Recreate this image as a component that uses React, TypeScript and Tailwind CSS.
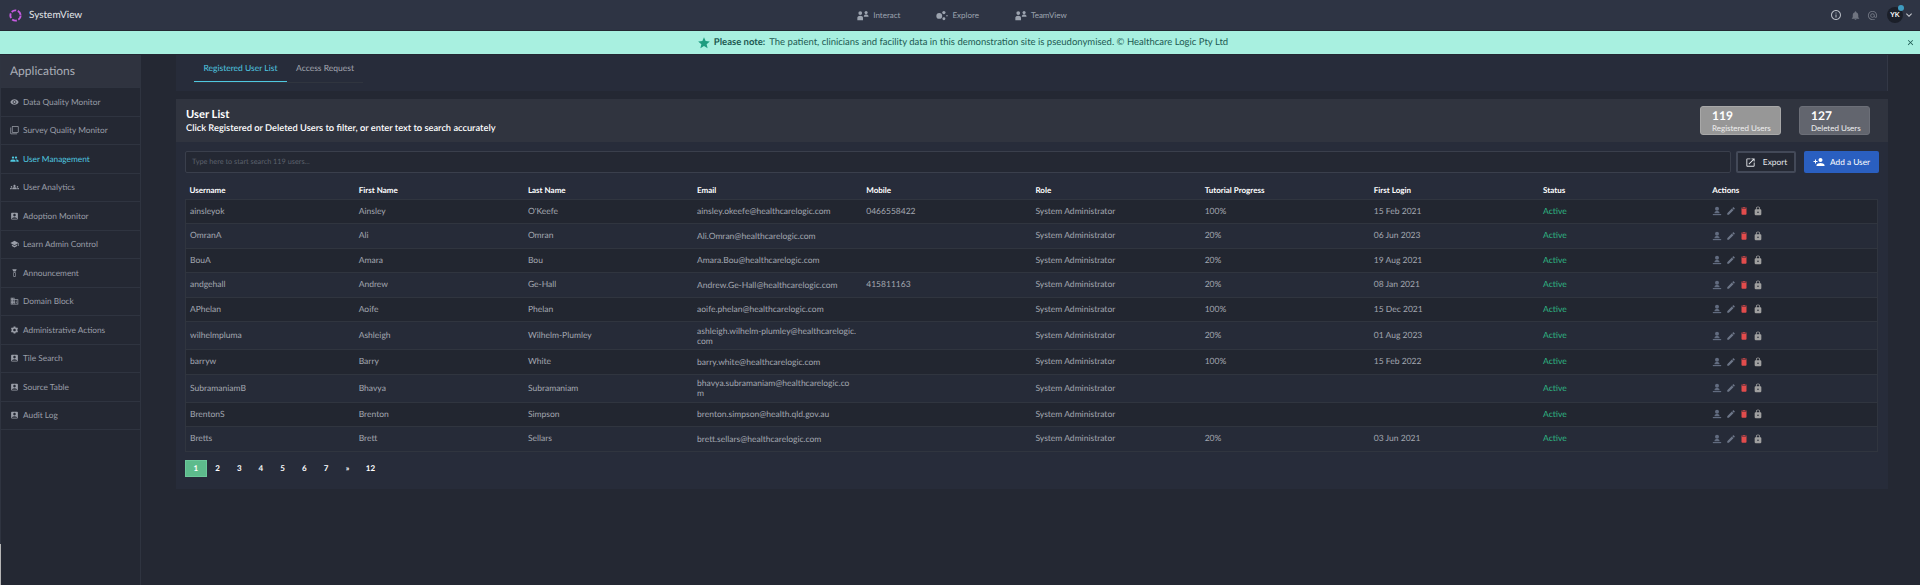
import type { ReactNode } from 'react';
import {
  MdVisibility, MdOutlineFilterNone, MdPeople, MdGroups, MdAccountBox, MdSchool, MdDomain, MdSettings,
  MdInfoOutline, MdNotifications, MdAlternateEmail, MdExpandMore, MdClose, MdStar, MdOutlineOpenInNew,
  MdPersonAdd, MdEdit, MdDelete, MdLock,
} from 'react-icons/md';

const menu: { label: string; icon: ReactNode; active?: boolean }[] = [
  { label: 'Data Quality Monitor', icon: <MdVisibility /> },
  { label: 'Survey Quality Monitor', icon: <MdOutlineFilterNone /> },
  { label: 'User Management', icon: <MdPeople />, active: true },
  { label: 'User Analytics', icon: <MdGroups /> },
  { label: 'Adoption Monitor', icon: <MdAccountBox /> },
  { label: 'Learn Admin Control', icon: <MdSchool /> },
  { label: 'Announcement', icon: <AnnounceIcon /> },
  { label: 'Domain Block', icon: <MdDomain /> },
  { label: 'Administrative Actions', icon: <MdSettings /> },
  { label: 'Tile Search', icon: <MdAccountBox /> },
  { label: 'Source Table', icon: <MdAccountBox /> },
  { label: 'Audit Log', icon: <MdAccountBox /> },
];

const columns = ['Username', 'First Name', 'Last Name', 'Email', 'Mobile', 'Role', 'Tutorial Progress', 'First Login', 'Status', 'Actions'];

// emails carry a newline where the column wraps them
const users = [
  ['ainsleyok', 'Ainsley', "O'Keefe", 'ainsley.okeefe@healthcarelogic.com', '0466558422', '100%', '15 Feb 2021'],
  ['OmranA', 'Ali', 'Omran', 'Ali.Omran@healthcarelogic.com', '', '20%', '06 Jun 2023'],
  ['BouA', 'Amara', 'Bou', 'Amara.Bou@healthcarelogic.com', '', '20%', '19 Aug 2021'],
  ['andgehall', 'Andrew', 'Ge-Hall', 'Andrew.Ge-Hall@healthcarelogic.com', '415811163', '20%', '08 Jan 2021'],
  ['APhelan', 'Aoife', 'Phelan', 'aoife.phelan@healthcarelogic.com', '', '100%', '15 Dec 2021'],
  ['wilhelmpluma', 'Ashleigh', 'Wilhelm-Plumley', 'ashleigh.wilhelm-plumley@healthcarelogic.\ncom', '', '20%', '01 Aug 2023'],
  ['barryw', 'Barry', 'White', 'barry.white@healthcarelogic.com', '', '100%', '15 Feb 2022'],
  ['SubramaniamB', 'Bhavya', 'Subramaniam', 'bhavya.subramaniam@healthcarelogic.co\nm', '', '', ''],
  ['BrentonS', 'Brenton', 'Simpson', 'brenton.simpson@health.qld.gov.au', '', '', ''],
  ['Bretts', 'Brett', 'Sellars', 'brett.sellars@healthcarelogic.com', '', '20%', '03 Jun 2021'],
];

function AnnounceIcon() {
  return (
    <svg viewBox="0 0 12 12" fill="currentColor" className="h-3 w-3">
      <path d="M3 1h6L7.5 4h-3z" />
      <path d="M4.5 5h3v6h-3z M5.3 6v4h1.4V6z" fillRule="evenodd" />
    </svg>
  );
}

function Logo() {
  return (
    <svg viewBox="0 0 24 24" className="h-[13px] w-[13px]" fill="none" stroke="#c65be0" strokeWidth="3.5">
      <circle cx="12" cy="12" r="9.5" strokeDasharray="9 3" />
    </svg>
  );
}

function TwoUsers() {
  return (
    <svg viewBox="0 0 14 12" fill="currentColor" className="h-[11px] w-[12px]">
      <circle cx="3.8" cy="3.2" r="2.2" />
      <path d="M0.4 11.5V8.6C0.4 7 2 6.2 3.8 6.2S7 7 7 8.6v2.9z" />
      <circle cx="10.6" cy="2.6" r="1.8" />
      <path d="M8 7.5V6.6c0-1.2 1.2-1.9 2.6-1.9s2.8.7 2.8 1.9v.9z" />
    </svg>
  );
}

function ExploreDots() {
  return (
    <svg viewBox="0 0 14 12" fill="currentColor" className="h-[11px] w-[12px]">
      <circle cx="3.8" cy="6.5" r="3.4" />
      <circle cx="9.2" cy="2.6" r="1.9" />
      <circle cx="9.2" cy="9.8" r="1.7" />
      <circle cx="12.8" cy="6.2" r="0.9" />
    </svg>
  );
}

function UserStamp() {
  return (
    <svg viewBox="0 0 12 12" fill="currentColor" className="h-[10px] w-[10px] text-[#626c80]">
      <circle cx="6" cy="3.2" r="2.4" />
      <path d="M3 8c0-1.3 1.4-2 3-2s3 .7 3 2v.8H3z" />
      <path d="M1 9.6h10V11H1z" />
    </svg>
  );
}

function NavItem({ icon, label }: { icon: ReactNode; label: string }) {
  return (
    <div className="flex items-center gap-[4px] text-[#9ca3af]">
      {icon}
      <span className="text-[8px]">{label}</span>
    </div>
  );
}

export default function App() {
  return (
    <div className="flex h-[585px] flex-col overflow-hidden bg-[#242833] font-['Lato','Noto_Sans',sans-serif] text-[#a3a7b0] [text-rendering:geometricPrecision]">
      {/* Top bar */}
      <header className="flex h-[30px] items-center bg-[#2e3444] pl-[9px] pr-[5px]">
        <div className="flex flex-1 items-center gap-[7px] text-[10px] text-[#e5e7eb]">
          <Logo />
          <span>SystemView</span>
        </div>
        <nav className="flex items-center gap-[36px]">
          <NavItem icon={<TwoUsers />} label="Interact" />
          <NavItem icon={<ExploreDots />} label="Explore" />
          <NavItem icon={<TwoUsers />} label="TeamView" />
        </nav>
        <div className="flex flex-1 items-center justify-end text-[#6f7480]">
          <MdInfoOutline className="text-[12px] text-[#b5b9c2]" />
          <MdNotifications className="ml-[8px] text-[11px]" />
          <MdAlternateEmail className="ml-[6px] text-[11px]" />
          <div className="relative ml-[9px] flex h-[16px] w-[16px] items-center justify-center rounded-full bg-[#1b1f29] text-[7px] font-bold text-white">
            YK
            <span className="absolute -right-[1px] -top-[2px] h-[6px] w-[6px] rounded-full bg-[#3e9bc0]" />
          </div>
          <MdExpandMore className="text-[12px] text-[#c5c8cf]" />
        </div>
      </header>

      {/* Notice */}
      <div className="relative mt-[1px] flex h-[23px] items-center justify-center bg-[#a8f0e0] pl-[5px] pt-[2px] text-[9.5px] text-[#1d5a52]">
        <MdStar className="-mt-[2px] mr-[3px] text-[14px] text-[#1f9d80]" />
        <b className="mr-[4px]">Please note:</b>
        The patient, clinicians and facility data in this demonstration site is pseudonymised. © Healthcare Logic Pty Ltd
        <MdClose className="absolute right-[5px] top-[7px] text-[9px] text-[#1d5a52]" />
      </div>

      <div className="mt-[1px] flex min-h-0 flex-1">
        {/* Sidebar */}
        <aside className="flex w-[141px] flex-col border-x border-[#2f3440]">
          <div className="flex h-[32px] shrink-0 items-center bg-[#2f333f] pl-[9px] text-[12px] text-[#a9adb6]">Applications</div>
          {menu.map((m) => (
            <div
              key={m.label}
              className={`flex h-[28.5px] shrink-0 items-center gap-[4px] border-t border-[#2f3440] pl-[9px] text-[8.3px] ${m.active ? 'text-[#4fc8e0]' : 'text-[#9a9ea8]'}`}
            >
              <span className="flex w-[9px] justify-center text-[10px]">{m.icon}</span>
              {m.label}
            </div>
          ))}
          <div className="border-t border-[#2f3440]" />
          <div className="-ml-px mt-auto h-[41px] border-l border-[#b5b5b5]" />
        </aside>

        {/* Main */}
        <main className="min-w-0 flex-1 pl-[35px] pr-[32px]">
          <div className="h-[36px] border-r border-[#333846] bg-[#272c3a] pl-[18px]">
            <div className="flex w-[169px] border-b border-[#30353f] text-[8.5px]">
              <div className="flex h-[27px] w-[93px] items-center justify-center border-b border-[#4fc8e0] text-[#4fc8e0]">Registered User List</div>
              <div className="flex h-[27px] flex-1 items-center justify-center text-[#a3a7b0]">Access Request</div>
            </div>
          </div>

          <section className="mt-[8px] h-[390px] bg-[#272c3a]">
            <div className="flex h-[43px] items-center justify-between bg-[#30343f] pl-[10px] pr-[18px]">
              <div className="pt-[1px] text-white">
                <div className="text-[11.2px] font-bold leading-[14px]">User List</div>
                <div className="text-[9.3px] font-semibold leading-[12px]">Click Registered or Deleted Users to filter, or enter text to search accurately</div>
              </div>
              <div className="flex gap-[18px] text-white">
                <div className="flex h-[29px] w-[81px] flex-col justify-center rounded-[3px] border border-[#a8a8a8] bg-[#979797] pl-[11px] leading-none">
                  <b className="text-[12px]">119</b>
                  <span className="mt-[2px] text-[8px] text-[#eee]">Registered Users</span>
                </div>
                <div className="flex h-[29px] w-[71px] flex-col justify-center rounded-[3px] border border-[#6c6f78] bg-[#62656e] pl-[11px] leading-none">
                  <b className="text-[12px]">127</b>
                  <span className="mt-[2px] text-[8px] text-[#eee]">Deleted Users</span>
                </div>
              </div>
            </div>

            <div className="mt-[9px] flex h-[22px] gap-[5px] px-[9px]">
              <div className="flex flex-1 items-center rounded-[2px] border border-[#3a3f4c] bg-[#242833] pl-[6px] text-[7.3px] text-[#5c616d]">
                Type here to start search 119 users...
              </div>
              <div className="flex w-[60px] items-center justify-center gap-[7px] rounded-[2px] border-2 border-[#434958] bg-[#242833] text-[8.3px] text-[#e5e7eb]">
                <MdOutlineOpenInNew className="text-[11px]" /> Export
              </div>
              <div className="ml-[3px] flex w-[75px] items-center justify-center gap-[5px] rounded-[2px] bg-[#2a5fc0] text-[8.3px] text-white">
                <MdPersonAdd className="text-[12px]" /> Add a User
              </div>
            </div>

            <table className="ml-[9px] mt-[8px] w-[1693px] table-fixed border-collapse text-left text-[8.5px]">
              <thead>
                <tr className="h-[18px] text-[8px] text-white">
                  {columns.map((c) => (
                    <th key={c} className="px-[4px] font-bold">{c}</th>
                  ))}
                </tr>
              </thead>
              <tbody className="border-x border-[#30353f]">
                {users.map((u, i) => (
                  <tr key={u[0]} className={`border-y border-[#30353f] ${i % 2 === 0 ? 'bg-[#222630]' : 'bg-[#262b38]'}`}>
                    <td className="h-[24.5px] px-[4px]">{u[0]}</td>
                    <td className="px-[4px]">{u[1]}</td>
                    <td className="px-[4px]">{u[2]}</td>
                    <td className="whitespace-pre-line px-[4px] py-[3.5px] leading-[10px]">{u[3]}</td>
                    <td className="px-[4px]">{u[4]}</td>
                    <td className="px-[4px]">System Administrator</td>
                    <td className="px-[4px]">{u[5]}</td>
                    <td className="px-[4px]">{u[6]}</td>
                    <td className="px-[4px] text-[#2fb884]">Active</td>
                    <td className="px-[4px]">
                      <div className="flex items-center gap-[3.5px] text-[10px]">
                        <UserStamp />
                        <MdEdit className="text-[#6d7688]" />
                        <MdDelete className="text-[#e24c4c]" />
                        <MdLock className="text-[#a0a0a0]" />
                      </div>
                    </td>
                  </tr>
                ))}
              </tbody>
            </table>

            <div className="ml-[9px] mt-[8px] flex text-[8px] font-bold text-white">
              {['1', '2', '3', '4', '5', '6', '7', '»', '12'].map((p, i) => (
                <div key={p} className={`flex h-[17px] items-center justify-center ${i === 8 ? 'w-[24px]' : 'w-[21.7px]'} ${i === 0 ? 'border border-[#6cc89b] bg-[#5dbb8c]' : ''}`}>
                  {p}
                </div>
              ))}
            </div>
          </section>
        </main>
      </div>
    </div>
  );
}
